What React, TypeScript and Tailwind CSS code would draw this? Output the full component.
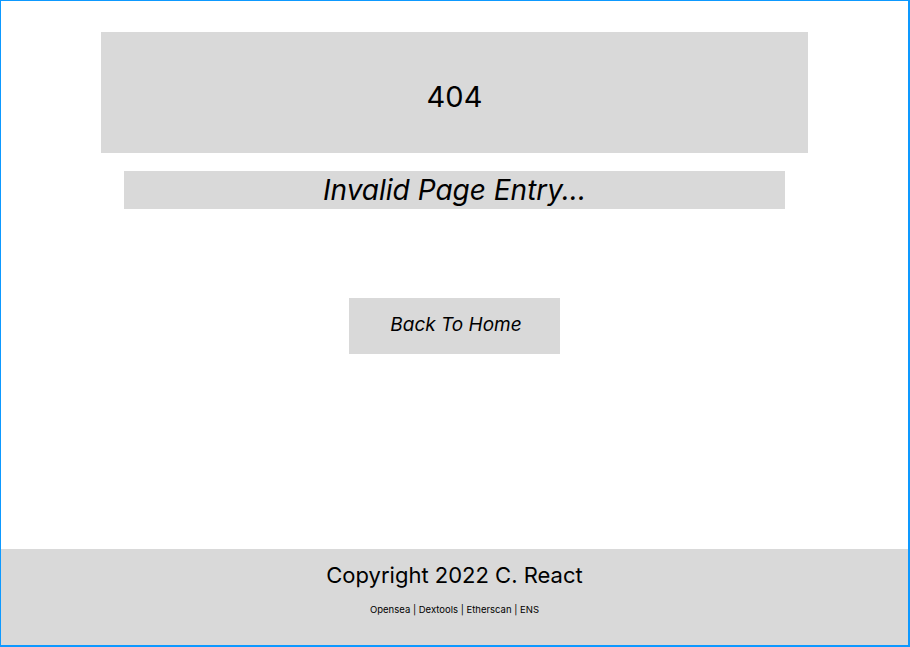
export default function App() {
  return (
    <div
      className="flex h-[647px] w-full flex-col border-l border-t border-r-2 border-b-2 border-[#0d99ff] bg-white text-black"
      style={{ fontFamily: 'Inter, "Noto Sans", sans-serif' }}
    >
      {/* Content */}
      <main className="flex flex-1 flex-col items-center">
        <div className="mt-[31px] flex h-[121px] w-[707px] items-center justify-center bg-[#d9d9d9] pt-[8px]">
          <span className="text-[29px] leading-none">404</span>
        </div>

        <div className="mt-[18px] flex h-[38px] w-[661px] items-center justify-center bg-[#d9d9d9]">
          <span className="text-[28px] italic leading-none">Invalid Page Entry...</span>
        </div>

        <button className="mt-[89px] flex h-[56px] w-[211px] items-center justify-center bg-[#d9d9d9] pb-[4px] pl-[3px]">
          <span className="text-[19px] italic leading-none">Back To Home</span>
        </button>
      </main>

      {/* Footer */}
      <footer className="flex h-[96px] flex-col items-center bg-[#d9d9d9]">
        <p className="mt-[14px] text-[22px] leading-[24px]">Copyright 2022 C. React</p>
        <p className="mt-[17px] text-[9.5px] leading-[12px]">
          Opensea | Dextools | Etherscan | ENS
        </p>
      </footer>
    </div>
  )
}
